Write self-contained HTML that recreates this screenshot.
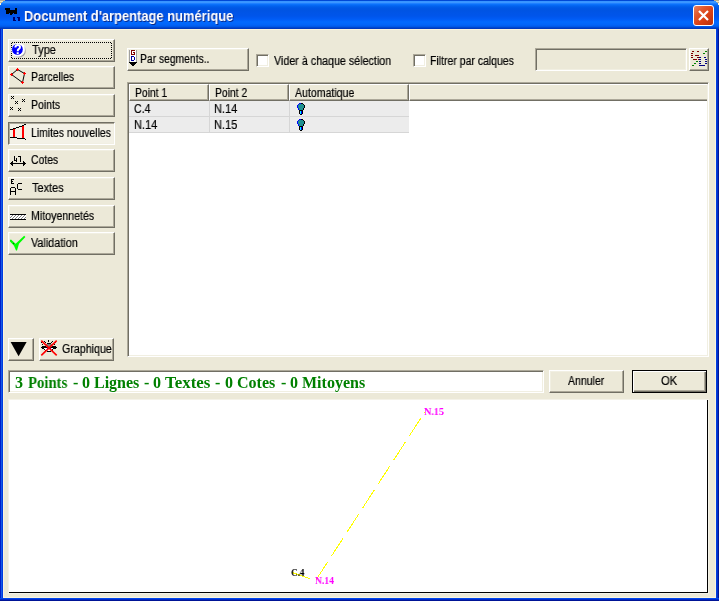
<!DOCTYPE html>
<html>
<head>
<meta charset="utf-8">
<title>Document d'arpentage numérique</title>
<style>
html,body{margin:0;padding:0;}
body{width:719px;height:601px;overflow:hidden;background:#ECE9D8;position:relative;font-family:"Liberation Sans",sans-serif;font-size:12px;line-height:14px;color:#000;}
.abs{position:absolute;}
#frame{position:absolute;left:0;top:0;width:719px;height:601px;background:linear-gradient(to bottom,transparent 598px,#0046EB 598px,#0046EB 599px,#0028C8 599px,#0028C8 600px,#001496 600px),linear-gradient(to right,#001EC8 0,#001EC8 1px,#145AE6 1px,#145AE6 2px,#003CE1 2px,#003CE1 3px,transparent 3px,transparent 716px,#003CE1 716px,#003CE1 717px,#0032C8 717px,#0032C8 718px,#001496 718px);}
#title{position:absolute;left:0;top:0;width:719px;height:29px;
 background:linear-gradient(to bottom,#0048D6 0,#0048D6 1px,#3593FF 1px,#3C96FF 2.5px,#1F80FF 3.5px,#0A70FA 4.5px,#0262EE 6px,#0057E5 8px,#0054E3 10px,#0055EB 16px,#005BF5 19px,#026AFE 22px,#0264F8 25px,#0059E8 26.5px,#0048D0 27.5px,#0034B4 29px);}
#title .cap{position:absolute;left:23.5px;top:8px;font-weight:bold;font-size:14px;line-height:16px;color:#fff;white-space:nowrap;text-shadow:1px 1px 0 #0A2A8A;transform-origin:0 0;transform:scaleX(0.924);will-change:transform;}
#close{position:absolute;left:693px;top:5px;width:19px;height:19px;border:1px solid #fff;border-radius:3px;background:linear-gradient(135deg,#E9825F 0%,#E2592E 30%,#DA4014 60%,#B8300C 100%);}
#client{position:absolute;left:3px;top:29px;width:713px;height:569px;background:#ECE9D8;box-sizing:border-box;border:1px solid #FBF4DC;}
.btn{position:absolute;box-sizing:border-box;background:#ECE9D8;border:1px solid;border-color:#fff #716F64 #716F64 #fff;box-shadow:inset -1px -1px 0 #ACA899, inset 1px 1px 0 #F1EFE2;}
.btn.down{border-color:#716F64 #fff #fff #716F64;box-shadow:inset 1px 1px 0 #ACA899, inset -1px -1px 0 #F1EFE2;background:#F3F1E6;}
.btn.dflt{border-color:#000;box-shadow:inset 1px 1px 0 #fff, inset -1px -1px 0 #716F64, inset -2px -2px 0 #ACA899;}
.sunk2{position:absolute;box-sizing:border-box;border:1px solid;border-color:#ACA899 #fff #fff #ACA899;box-shadow:inset 1px 1px 0 #716F64, inset -1px -1px 0 #F1EFE2;}
.chk{position:absolute;box-sizing:border-box;width:13px;height:13px;background:#fff;border:1px solid;border-color:#ACA899 #fff #fff #ACA899;box-shadow:inset 1px 1px 0 #716F64, inset -1px -1px 0 #F1EFE2;}
.tx{position:absolute;white-space:nowrap;transform-origin:0 0;will-change:transform;-webkit-text-stroke:0.2px currentColor;}
.hdr{position:absolute;top:0;height:17px;box-sizing:border-box;background:#ECE9D8;border:1px solid;border-color:#fff #716F64 #716F64 #fff;box-shadow:inset -1px -1px 0 #ACA899;}
.row{position:absolute;left:129px;width:280px;height:16px;background:#ECECEC;box-sizing:border-box;border-bottom:1px solid #D6D6D6;}
.row i{position:absolute;top:0;width:1px;height:15px;background:#D6D6D6;}
#status{position:absolute;left:0;top:374px;font-family:"Liberation Serif",serif;font-weight:bold;font-size:16px;line-height:18px;color:#008000;}
#status span{position:absolute;top:0;white-space:nowrap;transform-origin:0 0;will-change:transform;}
.pt{font-family:"Liberation Serif",serif;font-size:10.67px;font-weight:bold;line-height:12px;-webkit-text-stroke:0;}
svg{display:block;}
</style>
</head>
<body>
<div id="frame"></div>
<div id="title">
  <svg class="abs" style="left:0;top:0" width="24" height="29" shape-rendering="crispEdges">
    <g fill="#000"><rect x="5" y="8" width="5" height="2"/><rect x="6" y="10" width="3" height="4"/><rect x="9" y="10" width="8" height="3"/><rect x="10" y="13" width="2" height="2"/><rect x="12" y="13" width="1" height="1"/><rect x="14" y="13" width="3" height="1"/><rect x="15" y="8" width="2" height="2"/></g>
    <g fill="#000068"><rect x="13" y="17" width="2" height="4"/><rect x="13" y="20" width="3" height="1"/><rect x="17" y="17" width="3" height="1"/><rect x="17.5" y="17" width="2" height="4"/></g>
  </svg>
  <div class="cap">Document d'arpentage numérique</div>
  <div id="close"><svg width="19" height="19" viewBox="0 0 19 19" style="position:absolute;left:0;top:0"><path d="M5 5 L14 14 M14 5 L5 14" stroke="#fff" stroke-width="2.2" stroke-linecap="butt"/></svg></div>
</div>
<svg class="abs" style="left:0;top:0;" width="719" height="6" shape-rendering="crispEdges">
  <rect x="0" y="0" width="5" height="1" fill="#B8AE90"/><rect x="0" y="1" width="3" height="1" fill="#EDE4C0"/><rect x="0" y="2" width="2" height="1" fill="#C4B48C"/><rect x="0" y="3" width="1" height="2" fill="#FFFBE6"/>
  <rect x="714" y="0" width="5" height="1" fill="#B8AE90"/><rect x="716" y="1" width="3" height="1" fill="#EDE4C0"/><rect x="717" y="2" width="2" height="1" fill="#C4B48C"/><rect x="718" y="3" width="1" height="2" fill="#FFFBE6"/>
</svg>
<div id="client"></div>

<!-- left buttons -->
<div class="btn" style="left:8px;top:39px;width:107px;height:23px;"></div>
<div class="btn" style="left:8px;top:66px;width:107px;height:23px;"></div>
<div class="btn" style="left:8px;top:94px;width:107px;height:23px;"></div>
<div class="btn down" style="left:8px;top:122px;width:107px;height:23px;"></div>
<div class="btn" style="left:8px;top:149px;width:107px;height:23px;"></div>
<div class="btn" style="left:8px;top:177px;width:107px;height:23px;"></div>
<div class="btn" style="left:8px;top:205px;width:107px;height:23px;"></div>
<div class="btn" style="left:8px;top:232px;width:107px;height:23px;"></div>
<span class="tx" style="left:32.00px;top:43px;transform:scaleX(0.9200)">Type</span><span class="tx" style="left:31.12px;top:70px;transform:scaleX(0.8750)">Parcelles</span><span class="tx" style="left:31.12px;top:98px;transform:scaleX(0.8750)">Points</span><span class="tx" style="left:31.13px;top:126px;transform:scaleX(0.8681)">Limites nouvelles</span><span class="tx" style="left:31.13px;top:153px;transform:scaleX(0.8667)">Cotes</span><span class="tx" style="left:32.00px;top:181px;transform:scaleX(0.9118)">Textes</span><span class="tx" style="left:31.11px;top:209px;transform:scaleX(0.8857)">Mitoyennetés</span><span class="tx" style="left:31.00px;top:236px;transform:scaleX(0.9020)">Validation</span>



<!-- top toolbar -->
<div class="btn" style="left:127px;top:48px;width:122px;height:23px;"></div>
<svg class="abs" style="left:127px;top:48px;" width="14" height="23" shape-rendering="crispEdges">
  <rect x="2" y="2" width="8" height="12" fill="#A0A0A0"/><rect x="3" y="2" width="6" height="12" fill="#fff"/>
  <g fill="#800000"><rect x="4" y="2" width="4" height="1"/><rect x="4" y="3" width="1" height="3"/><rect x="6" y="4" width="2" height="1"/><rect x="7" y="5" width="1" height="1"/><rect x="4" y="6" width="4" height="1"/></g>
  <g fill="#0000A0"><rect x="4" y="8" width="3" height="1"/><rect x="4" y="9" width="1" height="3"/><rect x="7" y="9" width="1" height="3"/><rect x="4" y="12" width="3" height="1"/></g>
  <g fill="#000"><rect x="2" y="14" width="8" height="1"/><rect x="3" y="15" width="6" height="1"/><rect x="4" y="16" width="4" height="1"/><rect x="5" y="17" width="2" height="1"/></g>
</svg>
<span class="tx" style="left:140.14px;top:52px;transform:scaleX(0.8608)">Par segments..</span>
<div class="chk" style="left:256px;top:54px;"></div>
<span class="tx" style="left:274.00px;top:54px;transform:scaleX(0.8931)">Vider à chaque sélection</span>
<div class="chk" style="left:413px;top:54px;"></div>
<span class="tx" style="left:430.13px;top:54px;transform:scaleX(0.8737)">Filtrer par calques</span>
<div class="sunk2" style="left:535px;top:48px;width:152px;height:23px;"></div>
<div class="btn" style="left:689px;top:48px;width:20px;height:23px;"></div>
<svg class="abs" style="left:689px;top:48px;" width="20" height="23" shape-rendering="crispEdges"><rect x="3" y="3" width="2" height="1" fill="#800000"/><rect x="8" y="3" width="2" height="1" fill="#800000"/><rect x="16" y="3" width="2" height="1" fill="#008000"/><rect x="2" y="5" width="2" height="1" fill="#800000"/><rect x="14" y="5" width="2" height="1" fill="#008000"/><rect x="2" y="7" width="2" height="1" fill="#800000"/><rect x="6" y="7" width="4" height="1" fill="#800000"/><rect x="2" y="9" width="2" height="1" fill="#800000"/><rect x="8" y="9" width="2" height="1" fill="#800000"/><rect x="10" y="9" width="2" height="1" fill="#000080"/><rect x="15" y="9" width="2" height="1" fill="#000080"/><rect x="4" y="11" width="4" height="1" fill="#800000"/><rect x="9" y="11" width="1" height="1" fill="#800000"/><rect x="10" y="11" width="2" height="1" fill="#000080"/><rect x="16" y="11" width="2" height="1" fill="#000080"/><rect x="7" y="13" width="2" height="1" fill="#008000"/><rect x="10" y="13" width="2" height="1" fill="#000080"/><rect x="16" y="13" width="2" height="1" fill="#000080"/><rect x="5" y="15" width="2" height="1" fill="#008000"/><rect x="10" y="15" width="2" height="1" fill="#000080"/><rect x="16" y="15" width="2" height="1" fill="#000080"/><rect x="3" y="17" width="2" height="1" fill="#008000"/><rect x="10" y="17" width="6" height="1" fill="#000080"/></svg>

<!-- list view -->
<div class="sunk2" style="left:127px;top:82px;width:582px;height:275px;background:#fff;"></div>
<div class="abs" style="left:129px;top:84px;width:578px;height:17px;overflow:hidden;">
<div class="hdr" style="left:0px;width:80px;"></div>
<div class="hdr" style="left:80px;width:80px;"></div>
<div class="hdr" style="left:160px;width:120px;"></div>
<div class="hdr" style="left:280px;width:320px;"></div>
</div>
<div class="row" style="top:101px;"><i style="left:80px"></i><i style="left:160px"></i></div>
<div class="row" style="top:117px;"><i style="left:80px"></i><i style="left:160px"></i></div>
<svg class="abs" style="left:297px;top:103px;" width="8" height="12" shape-rendering="crispEdges">
  <rect x="2" y="0" width="4" height="1" fill="#000"/><rect x="1" y="1" width="6" height="1" fill="#000"/><rect x="0" y="2" width="8" height="3" fill="#000"/><rect x="1" y="5" width="6" height="2" fill="#000"/>
  <rect x="2" y="0" width="2" height="1" fill="#0000FF"/><rect x="1" y="1" width="1" height="1" fill="#0000FF"/><rect x="0" y="2" width="1" height="3" fill="#0000FF"/><rect x="1" y="5" width="1" height="2" fill="#0000FF"/>
  <rect x="2" y="1" width="4" height="1" fill="#209090"/><rect x="1" y="2" width="6" height="3" fill="#209090"/><rect x="2" y="5" width="4" height="2" fill="#209090"/>
  <rect x="2" y="7" width="4" height="4" fill="#000"/><rect x="3" y="8" width="1" height="3" fill="#00FFFF"/><rect x="4" y="8" width="1" height="3" fill="#0000FF"/><rect x="3" y="11" width="2" height="1" fill="#000"/>
</svg>
<svg class="abs" style="left:297px;top:119px;" width="8" height="12" shape-rendering="crispEdges">
  <rect x="2" y="0" width="4" height="1" fill="#000"/><rect x="1" y="1" width="6" height="1" fill="#000"/><rect x="0" y="2" width="8" height="3" fill="#000"/><rect x="1" y="5" width="6" height="2" fill="#000"/>
  <rect x="2" y="0" width="2" height="1" fill="#0000FF"/><rect x="1" y="1" width="1" height="1" fill="#0000FF"/><rect x="0" y="2" width="1" height="3" fill="#0000FF"/><rect x="1" y="5" width="1" height="2" fill="#0000FF"/>
  <rect x="2" y="1" width="4" height="1" fill="#209090"/><rect x="1" y="2" width="6" height="3" fill="#209090"/><rect x="2" y="5" width="4" height="2" fill="#209090"/>
  <rect x="2" y="7" width="4" height="4" fill="#000"/><rect x="3" y="8" width="1" height="3" fill="#00FFFF"/><rect x="4" y="8" width="1" height="3" fill="#0000FF"/><rect x="3" y="11" width="2" height="1" fill="#000"/>
</svg>
<span class="tx" style="left:135.14px;top:86px;transform:scaleX(0.8611)">Point 1</span><span class="tx" style="left:215.14px;top:86px;transform:scaleX(0.8611)">Point 2</span><span class="tx" style="left:295.00px;top:86px;transform:scaleX(0.8806)">Automatique</span><span class="tx" style="left:134.12px;top:102px;transform:scaleX(0.8824)">C.4</span><span class="tx" style="left:214.08px;top:102px;transform:scaleX(0.9167)">N.14</span><span class="tx" style="left:134.08px;top:118px;transform:scaleX(0.9167)">N.14</span><span class="tx" style="left:214.08px;top:118px;transform:scaleX(0.9167)">N.15</span>

<!-- bottom-left buttons -->
<div class="btn" style="left:8px;top:338px;width:26px;height:23px;"><svg class="abs" style="left:1px;top:2px" width="20" height="18"><polygon points="0.6,1 16.6,1 8.6,15.2" fill="#000"/></svg></div>
<div class="btn" style="left:39px;top:338px;width:75px;height:23px;"></div>
<span class="tx" style="left:62.11px;top:342px;transform:scaleX(0.8889)">Graphique</span>

<!-- status -->
<div class="sunk2" style="left:8px;top:370px;width:536px;height:23px;background:#fff;"></div>
<div id="status"><span style="left:14.5px;transform:scaleX(1)">3</span><span style="left:28.3px;transform:scaleX(0.92)">Points</span><span style="left:72.8px;transform:scaleX(1)">-</span><span style="left:81.6px;transform:scaleX(1)">0</span><span style="left:93.9px;transform:scaleX(0.99)">Lignes</span><span style="left:144.0px;transform:scaleX(1)">-</span><span style="left:152.7px;transform:scaleX(1)">0</span><span style="left:165.2px;transform:scaleX(1.055)">Textes</span><span style="left:215.3px;transform:scaleX(1)">-</span><span style="left:224.5px;transform:scaleX(1)">0</span><span style="left:237.1px;transform:scaleX(1)">Cotes</span><span style="left:280.9px;transform:scaleX(1)">-</span><span style="left:289.7px;transform:scaleX(1)">0</span><span style="left:302.2px;transform:scaleX(1)">Mitoyens</span></div>
<div class="btn" style="left:549px;top:370px;width:75px;height:23px;"></div>
<div class="btn dflt" style="left:632px;top:370px;width:75px;height:23px;"></div>
<span class="tx" style="left:568.00px;top:374px;transform:scaleX(0.8780)">Annuler</span><span class="tx" style="left:661.06px;top:374px;transform:scaleX(0.9375)">OK</span>

<!-- canvas -->
<div id="cv" style="position:absolute;left:8px;top:399px;width:701px;height:195px;box-sizing:border-box;border:1px solid #F4F2E8;"><div style="position:absolute;left:0;top:0;width:699px;height:193px;background:#fff;box-sizing:border-box;border-right:1px solid #000;border-bottom:1px solid #000;"></div></div>
<svg class="abs" style="left:0;top:0;" width="719" height="601" shape-rendering="crispEdges">
  <line x1="316" y1="580" x2="424.5" y2="412.5" stroke="#ffff00" stroke-width="1" stroke-dasharray="21.45 7.15"/>
  <line x1="292" y1="572.5" x2="316" y2="580.6" stroke="#ffff00" stroke-width="1" stroke-dasharray="18.86 6.29"/>
  <rect x="424" y="412" width="1" height="1" fill="#ffff00"/>
</svg>
<span style="color:#000"><span class="tx pt" style="left:291.14px;top:566px;transform:scaleX(0.8571)">C.4</span></span><span style="color:#ff00ff"><span class="tx pt" style="left:315.10px;top:574px;transform:scaleX(0.9000)">N.14</span><span class="tx pt" style="left:424.05px;top:405px;transform:scaleX(0.9500)">N.15</span></span>
<!-- icons -->
<svg class="abs" style="left:0;top:0;" width="130" height="370">
  <!-- focus rect on Type -->
  <g stroke="#000" stroke-width="1" stroke-dasharray="1 1" shape-rendering="crispEdges"><line x1="12" y1="42.5" x2="111" y2="42.5"/><line x1="12" y1="58.5" x2="111" y2="58.5"/><line x1="11.5" y1="43" x2="11.5" y2="58"/><line x1="111.5" y1="43" x2="111.5" y2="58"/></g>
  <!-- Type: help icon -->
  <defs><linearGradient id="hg" x1="0" y1="0" x2="1" y2="1"><stop offset="0.5" stop-color="#fff"/><stop offset="0.8" stop-color="#A8A8A8"/><stop offset="1" stop-color="#707070"/></linearGradient></defs>
  <circle cx="18.7" cy="50.4" r="7.3" fill="url(#hg)"/>
  <circle cx="18.2" cy="49.9" r="6.6" fill="#fff"/>
  <circle cx="17.4" cy="49.4" r="5.4" fill="#0000FF"/>
  <path d="M15.4 47.4 Q15.4 44.9 17.7 44.9 Q20 44.9 20 46.9 Q20 48.2 18.6 49.1 Q17.7 49.7 17.7 51.2" fill="none" stroke="#fff" stroke-width="2"/>
  <rect x="16.7" y="52.2" width="2" height="1.8" fill="#fff"/>
  <!-- Parcelles -->
  <g shape-rendering="crispEdges">
  <polygon points="17.5,69.5 24.5,73.5 22.5,82.5 11.5,74.5" fill="none" stroke="#000" stroke-width="1" shape-rendering="auto"/>
  <g fill="#FF0000">
   <rect x="16" y="69" width="3" height="1"/><rect x="17" y="68" width="1" height="3"/>
   <rect x="23" y="73" width="3" height="1"/><rect x="24" y="72" width="1" height="3"/>
   <rect x="21" y="82" width="3" height="1"/><rect x="22" y="81" width="1" height="3"/>
   <rect x="10" y="74" width="3" height="1"/><rect x="11" y="73" width="1" height="3"/>
  </g>
  <!-- Points: x marks -->
  <g fill="#000">
   <rect x="12" y="97" width="1" height="1"/><rect x="11" y="96" width="1" height="1"/><rect x="13" y="96" width="1" height="1"/><rect x="11" y="98" width="1" height="1"/><rect x="13" y="98" width="1" height="1"/><rect x="16" y="102" width="1" height="1"/><rect x="15" y="101" width="1" height="1"/><rect x="17" y="101" width="1" height="1"/><rect x="15" y="103" width="1" height="1"/><rect x="17" y="103" width="1" height="1"/><rect x="23" y="100" width="1" height="1"/><rect x="22" y="99" width="1" height="1"/><rect x="24" y="99" width="1" height="1"/><rect x="22" y="101" width="1" height="1"/><rect x="24" y="101" width="1" height="1"/><rect x="11" y="108" width="1" height="1"/><rect x="10" y="107" width="1" height="1"/><rect x="12" y="107" width="1" height="1"/><rect x="10" y="109" width="1" height="1"/><rect x="12" y="109" width="1" height="1"/><rect x="19" y="109" width="1" height="1"/><rect x="18" y="108" width="1" height="1"/><rect x="20" y="108" width="1" height="1"/><rect x="18" y="110" width="1" height="1"/><rect x="20" y="110" width="1" height="1"/>
  </g>
  <!-- Limites nouvelles -->
  <g fill="#FF0000"><rect x="13" y="129" width="2" height="8"/><rect x="22" y="125" width="2" height="13"/></g>
  <g fill="#000">
   <rect x="10" y="129" width="3" height="1"/><rect x="13" y="128" width="3" height="1"/><rect x="16" y="127" width="3" height="1"/><rect x="19" y="126" width="3" height="1"/><rect x="22" y="125" width="2" height="1"/><rect x="24" y="124" width="2" height="1"/>
   <rect x="10" y="137" width="7" height="1"/><rect x="17" y="138" width="8" height="1"/><rect x="25" y="139" width="1" height="1"/>
  </g>
  <!-- Cotes -->
  <g fill="#000">
   <rect x="10" y="163" width="16" height="1"/>
   <rect x="11" y="162" width="1" height="3"/><rect x="12" y="161" width="1" height="5"/>
   <rect x="24" y="162" width="1" height="3"/><rect x="23" y="161" width="1" height="5"/>
   <rect x="14" y="156" width="1" height="4"/><rect x="14" y="160" width="3" height="1"/><rect x="16" y="158" width="1" height="4"/>
   <rect x="18" y="156" width="3" height="1"/><rect x="20" y="156" width="1" height="6"/>
  </g>
  <!-- Textes -->
  <g fill="#000">
   <rect x="11" y="179" width="1" height="5"/><rect x="11" y="179" width="3" height="1"/><rect x="11" y="181" width="2" height="1"/><rect x="11" y="183" width="3" height="1"/>
   <rect x="11" y="187" width="4" height="1"/><rect x="10" y="188" width="1" height="7"/><rect x="15" y="188" width="1" height="7"/><rect x="10" y="191" width="6" height="1"/>
   <rect x="18" y="183" width="4" height="1"/><rect x="17" y="184" width="1" height="5"/><rect x="18" y="189" width="4" height="1"/>
  </g>
  <!-- Mitoyennetes -->
  <rect x="10" y="214" width="16" height="6" fill="#fff"/>
  <g fill="#000"><rect x="10" y="214" width="16" height="1"/><rect x="10" y="219" width="16" height="1"/></g>
  <g fill="#808080"><rect x="12" y="215" width="1" height="1"/><rect x="15" y="215" width="1" height="1"/><rect x="18" y="215" width="1" height="1"/><rect x="21" y="215" width="1" height="1"/><rect x="24" y="215" width="1" height="1"/><rect x="11" y="216" width="1" height="1"/><rect x="14" y="216" width="1" height="1"/><rect x="17" y="216" width="1" height="1"/><rect x="20" y="216" width="1" height="1"/><rect x="23" y="216" width="1" height="1"/><rect x="10" y="217" width="1" height="1"/><rect x="13" y="217" width="1" height="1"/><rect x="16" y="217" width="1" height="1"/><rect x="19" y="217" width="1" height="1"/><rect x="22" y="217" width="1" height="1"/><rect x="25" y="217" width="1" height="1"/><rect x="12" y="218" width="1" height="1"/><rect x="15" y="218" width="1" height="1"/><rect x="18" y="218" width="1" height="1"/><rect x="21" y="218" width="1" height="1"/><rect x="24" y="218" width="1" height="1"/></g>
  </g>
  <!-- Validation -->
  <polygon points="10,240 11,239.6 15.6,243.8 24.2,235.8 25.4,237 19,243.8 17,250.4 16,250.4 14,245.8 10,241.6" fill="#00FF00"/>
  <rect x="13" y="243" width="1" height="1" fill="#006000"/>
  <!-- Graphique: eye icon with red cross -->
  <g shape-rendering="crispEdges" fill="#000">
   <rect x="48" y="340" width="1" height="2"/>
   <rect x="44" y="341" width="1" height="1"/><rect x="45" y="342" width="1" height="1"/>
   <rect x="52" y="341" width="1" height="1"/><rect x="51" y="342" width="1" height="1"/>
   <rect x="41" y="342" width="1" height="1"/><rect x="42" y="344" width="1" height="1"/>
   <rect x="55" y="342" width="1" height="1"/><rect x="54" y="344" width="1" height="1"/>
   <rect x="47" y="343" width="4" height="1"/>
   <rect x="46" y="344" width="6" height="3" fill="#808080"/>
   <rect x="41" y="347" width="16" height="1"/>
   <rect x="42" y="346" width="3" height="3"/><rect x="53" y="346" width="3" height="3"/>
   <rect x="45" y="346" width="1" height="1"/><rect x="52" y="346" width="1" height="1"/>
   <rect x="44" y="348" width="9" height="2" fill="#fff"/>
   <rect x="47" y="348" width="1" height="1" fill="#0000FF"/><rect x="50" y="348" width="1" height="1" fill="#0000FF"/>
   <rect x="44" y="349" width="1" height="1"/><rect x="45" y="350" width="2" height="1"/><rect x="52" y="349" width="1" height="1"/><rect x="51" y="350" width="2" height="1"/>
   <rect x="48" y="350" width="2" height="1" fill="#fff"/>
   <rect x="47" y="351" width="4" height="1"/>
  </g>
  <path d="M41.3 340.6 L56.7 355.4 M56.7 340.6 L41.3 355.4" stroke="#FF0000" stroke-width="1.6" fill="none"/>
</svg>
</body>
</html>
